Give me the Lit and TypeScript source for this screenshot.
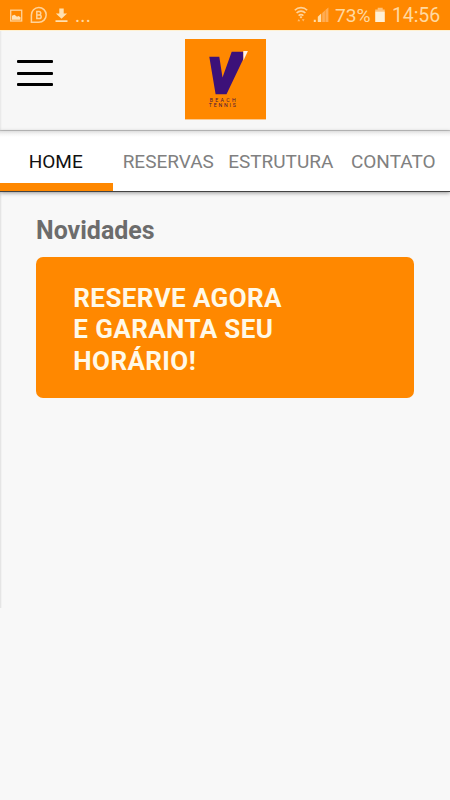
import { LitElement, html, css } from "lit";
import { customElement, property, state } from "lit/decorators.js";
import { classMap } from "lit/directives/class-map.js";

@customElement("status-bar")
class StatusBar extends LitElement {
  static styles = css`
    :host {
      display: flex;
      box-sizing: border-box;
      height: 30px;
      padding: 0 10px 0 8px;
      justify-content: space-between;
      background: #ff8800;
      color: #ffd9a0;
      font: 400 19.5px/32px Roboto, sans-serif;
    }
    .group { display: flex; height: 30px; }
    svg { display: block; }
    .more { margin-left: 2px; letter-spacing: 0.2px; }
    .percent { margin-left: 4px; width: 38px; white-space: nowrap; font-size: 19.2px; }
    .time { width: 48px; margin-left: 7px; white-space: nowrap; letter-spacing: -0.1px; }
  `;
  render() {
    return html`
      <div class="group">
        <svg width="65" height="30" viewBox="8 0 65 30" fill="none" stroke="#ffd39a">
          <rect x="10.7" y="10.2" width="11" height="10.8" stroke-width="1.3" />
          <path d="M12 19.7v-4l2.5-1 2.5 2 1.5-.8 2 1.3v2.5z" fill="#ffe2b8" stroke="none" />
          <path d="M31.4 22.3V15a7.4 7.4 0 1 1 7.4 7.3z" stroke-width="1.5" />
          <path d="M36.8 11.4h2.2a1.7 1.7 0 0 1 0 3.5h-2.2zm0 3.5h2.6a1.8 1.8 0 0 1 0 3.6h-2.6z" stroke-width="1.5" />
          <path d="M59.3 8.5h4.4v5h3.4l-5.6 5.2-5.6-5.2h3.4zM55.5 20.3h12v1.7h-12z" fill="#ffe0b0" stroke="none" />
        </svg>
        <span class="more">...</span>
      </div>
      <div class="group">
        <svg width="37" height="30" viewBox="294 0 37 30" fill="none" stroke="#ffd39a">
          <path d="M294.8 10.2a8.8 8.8 0 0 1 12.4 0M296.6 13a6.2 6.2 0 0 1 8.8 0M298.6 15.7a3.5 3.5 0 0 1 4.8 0" stroke-width="1.6" />
          <path d="M301 15.8l1.3 1.4-1.3 1.4-1.3-1.4z" fill="#ffd39a" stroke="none" />
          <path d="M297.4 21.3l1.4-2.2 1.4 2.2zM301.8 19.2h2.8l-1.4 2.2z" fill="#ffbd70" stroke="none" />
          <path d="M322.2 22v-9l2.7-2.4V22zM325.4 22V10.1l3-2.6V22z" fill="#ffad55" stroke="none" />
          <path d="M313.8 19.8h2V22h-2zM317.8 22v-5.2l3.4-3.4V22z" fill="#ffdda8" stroke="none" />
        </svg>
        <span class="percent">73%</span>
        <svg width="12" height="30" viewBox="373 0 12 30">
          <path d="M377.7 7.7h5v1.8h2V12h-9.5V9.5h2.5z" fill="#ffc27a" />
          <path d="M375.2 11.7h9.6V22h-9.6z" fill="#fff0d6" />
        </svg>
        <span class="time">14:56</span>
      </div>
    `;
  }
}

@customElement("app-header")
class AppHeader extends LitElement {
  static styles = css`
    :host {
      display: grid;
      grid-template-columns: 1fr 81px 1fr;
      box-sizing: border-box;
      height: 101px;
      padding: 8px 16.5px 0;
      background: linear-gradient(90deg, #e6e6e6, #f7f7f7 2px);
      border-top: 1px solid #fff1d2;
      border-bottom: 1px solid #c4c4c4;
    }
    .menu {
      all: unset;
      display: flex;
      flex-direction: column;
      justify-content: space-between;
      width: 36px;
      height: 26px;
      margin-top: 21.4px;
    }
    .line { height: 3px; border-radius: 1px; background: #000; }
    .logo { display: block; }
    .logo text { font: 400 5.2px Roboto, sans-serif; fill: #47143f; }
  `;
  render() {
    return html`
      <button class="menu" aria-label="Menu">
        <span class="line"></span><span class="line"></span><span class="line"></span>
      </button>
      <svg class="logo" width="81" height="82" viewBox="0 0 81 82">
        <rect width="81" height="80.4" fill="#ff8800" />
        <path d="M24.3 17.7h10l3.2 20.8 9.2-25.8h11.6V20L41.5 55.3H30.6z" fill="#3c1179" />
        <path d="M58.3 12h4.6l-4.4 9.5z" fill="#fff4e8" />
        <text x="24.8" y="62.6" textLength="25.8">BEACH</text>
        <text x="23.8" y="67.8" textLength="27">TENNIS</text>
      </svg>
    `;
  }
}

@customElement("tab-bar")
class TabBar extends LitElement {
  @property({ type: Array }) tabs: string[] = [];
  @state() private active = 0;
  static styles = css`
    :host {
      display: grid;
      grid-template-columns: repeat(4, 112.5px);
      position: relative;
      box-sizing: border-box;
      height: 61px;
      background: #fff linear-gradient(#dedede, #f5f5f5 3px, #fff 6px);
      border-bottom: 1px solid #444;
      box-shadow: 0 1px 4px rgba(0, 0, 0, 0.4);
    }
    .tab {
      all: unset;
      box-sizing: border-box;
      text-align: center;
      white-space: nowrap;
      color: #808080;
      font: 400 19px/56px Roboto, sans-serif;
      padding: 3px 1px 0 0;
      height: 60px;
      border-bottom: 8px solid transparent;
    }
    .active { color: #111; border-bottom-color: #ff8800; }
  `;
  render() {
    return this.tabs.map(
      (t, i) => html`<button
        class=${classMap({ tab: true, active: i === this.active })}
        @click=${() => (this.active = i)}
      >${t}</button>`
    );
  }
}

@customElement("app-root")
class AppRoot extends LitElement {
  static styles = css`
    :host {
      display: block;
      height: 800px;
      overflow: hidden;
      background: #f8f8f8;
      font-family: Roboto, sans-serif;
    }
    .content {
      box-sizing: border-box;
      height: 416px;
      padding: 24px 36px 0;
      background: linear-gradient(90deg, #dfdfdf, #f8f8f8 2px);
    }
    h2 {
      margin: 0;
      font-size: 25px;
      line-height: 30px;
      font-weight: 700;
      color: #6c6c6c;
    }
    .banner {
      box-sizing: border-box;
      margin-top: 11px;
      width: 378px;
      height: 141px;
      padding: 25.6px 37.3px;
      border-radius: 7px;
      background: #ff8800;
      color: #fff9e8;
      font-size: 26px;
      line-height: 31.6px;
      letter-spacing: 0.4px;
      font-weight: 700;
    }
  `;
  render() {
    return html`
      <status-bar></status-bar>
      <app-header></app-header>
      <tab-bar .tabs=${["HOME", "RESERVAS", "ESTRUTURA", "CONTATO"]}></tab-bar>
      <main class="content">
        <h2>Novidades</h2>
        <section class="banner">RESERVE AGORA<br />E GARANTA SEU<br />HORÁRIO!</section>
      </main>
    `;
  }
}
